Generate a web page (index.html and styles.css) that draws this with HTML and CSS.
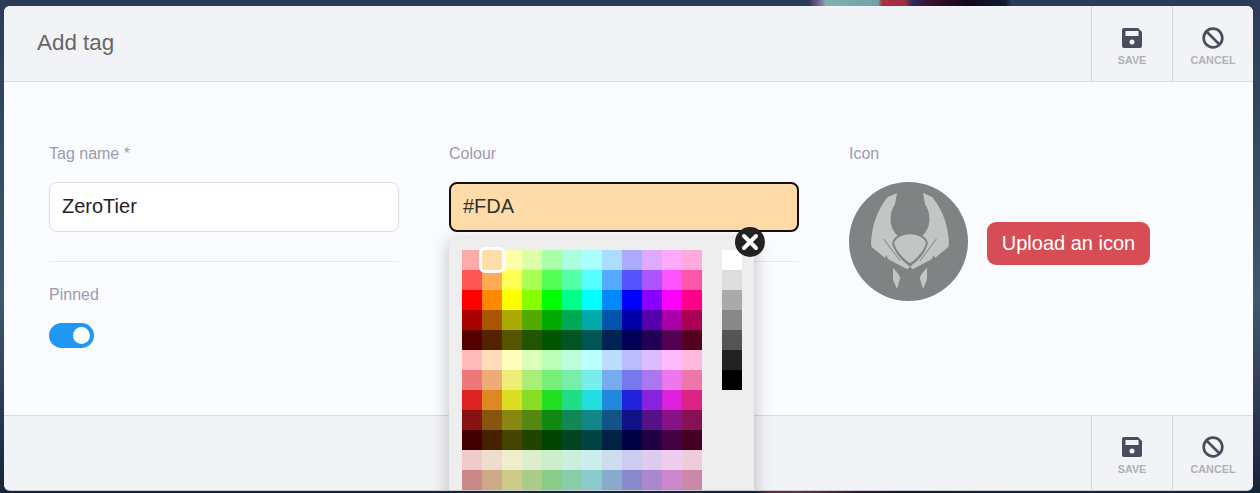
FILE: index.html
```html
<!DOCTYPE html>
<html lang="en">
<head>
    <meta charset="UTF-8">
    <meta name="viewport" content="width=device-width, initial-scale=1.0">
    <title>Add tag</title>
    <link rel="stylesheet" href="styles.css">
</head>
<body>
<div class="modal">
    <div class="bar bar-top">
        <h2 class="title">Add tag</h2>
        <button class="action">
            <svg class="icon" viewBox="0 0 22 22"><path fill-rule="evenodd" d="M4 1h13l4 4v14a2 2 0 0 1-2 2H3a2 2 0 0 1-2-2V3a2 2 0 0 1 2-2zM4.500 4v5h13V4zM11 12.500a2.500 2.500 0 1 0 0 5 2.500 2.500 0 0 0 0-5z"/></svg>
            <span>SAVE</span>
        </button>
        <button class="action">
            <svg class="icon" viewBox="0 0 512 512"><path d="M256 8C119 8 8 119 8 256s111 248 248 248 248-111 248-248S393 8 256 8zm130.100 117.900c65.500 65.500 69.800 166.700 18.300 236.900L149.200 107.600c70.200-51.500 171.400-47.200 236.900 18.300zM125.900 386.100c-65.500-65.500-69.800-166.700-18.300-236.900l255.200 255.200c-70.200 51.500-171.400 47.200-236.900-18.300z"/></svg>
            <span>CANCEL</span>
        </button>
    </div>

    <div class="content">
        <div class="col">
            <label class="label">Tag name *</label>
            <input class="field" type="text" value="ZeroTier">
            <hr class="rule">
            <label class="label">Pinned</label>
            <div class="toggle"><div class="knob"></div></div>
        </div>
        <div class="col">
            <label class="label">Colour</label>
            <input class="field field-colour" type="text" value="#FDA">
            <hr class="rule">
            <div class="picker">
                <div class="close">
                    <svg viewBox="0 0 30 30"><path d="M9 9l12 12M21 9L9 21"/></svg>
                </div>
                <div class="swatches" id="swatches"></div>
                <div class="greys" id="greys"></div>
            </div>
        </div>
        <div class="col">
            <label class="label">Icon</label>
            <div class="icon-row">
                <div class="avatar">
                    <svg viewBox="-18 -9 357 357">
                        <path id="ala" d="M126 24l-6 34c-18 26-20 68 8 94-12 7-17 17-16 26 8 26 28 48 53 67l-8 8-57-30-6-12-4 8-40-33-2-8c2-50 14-96 50-142z"/>
                        <use href="#ala" transform="matrix(-1 0 0 1 330 0)"/>
                        <path d="M165 148c25 0 43 11 48 26-7 26-27 46-48 61-21-15-41-35-48-61 5-15 23-26 48-26z"/>
                        <path id="hoja" d="M114 248l14 16 8 14-10 34-12-28z"/>
                        <use href="#hoja" transform="matrix(-1 0 0 1 330 0)"/>
                        <path class="avatar-line" d="M86 162l50 66M244 162l-50 66"/>
                    </svg>
                </div>
                <button class="upload">Upload an icon</button>
            </div>
        </div>
    </div>

    <div class="bar bar-bottom">
        <div class="spacer"></div>
        <button class="action">
            <svg class="icon" viewBox="0 0 22 22"><path fill-rule="evenodd" d="M4 1h13l4 4v14a2 2 0 0 1-2 2H3a2 2 0 0 1-2-2V3a2 2 0 0 1 2-2zM4.500 4v5h13V4zM11 12.500a2.500 2.500 0 1 0 0 5 2.500 2.500 0 0 0 0-5z"/></svg>
            <span>SAVE</span>
        </button>
        <button class="action">
            <svg class="icon" viewBox="0 0 512 512"><path d="M256 8C119 8 8 119 8 256s111 248 248 248 248-111 248-248S393 8 256 8zm130.100 117.900c65.500 65.500 69.800 166.700 18.300 236.900L149.200 107.600c70.200-51.500 171.400-47.200 236.900 18.300zM125.900 386.100c-65.500-65.500-69.800-166.700-18.300-236.900l255.200 255.200c-70.200 51.500-171.400 47.200-236.900-18.300z"/></svg>
            <span>CANCEL</span>
        </button>
    </div>
</div>

<script>
    const colores = [
        '#faa', '#fda', '#ffa', '#dfa', '#afa', '#afd', '#aff', '#adf', '#aaf', '#daf', '#faf', '#fad',
        '#f55', '#fa5', '#ff5', '#af5', '#5f5', '#5fa', '#5ff', '#5af', '#55f', '#a5f', '#f5f', '#f5a',
        '#f00', '#f80', '#ff0', '#8f0', '#0f0', '#0f8', '#0ff', '#08f', '#00f', '#80f', '#f0f', '#f08',
        '#a00', '#a50', '#aa0', '#5a0', '#0a0', '#0a5', '#0aa', '#05a', '#00a', '#50a', '#a0a', '#a05',
        '#500', '#520', '#550', '#250', '#050', '#052', '#055', '#025', '#005', '#205', '#505', '#502',
        '#fbb', '#fdb', '#ffb', '#dfb', '#bfb', '#bfd', '#bff', '#bdf', '#bbf', '#dbf', '#fbf', '#fbd',
        '#e77', '#ea7', '#ee7', '#ae7', '#7e7', '#7ea', '#7ee', '#7ae', '#77e', '#a7e', '#e7e', '#e7a',
        '#d22', '#d82', '#dd2', '#8d2', '#2d2', '#2d8', '#2dd', '#28d', '#22d', '#82d', '#d2d', '#d28',
        '#811', '#851', '#881', '#581', '#181', '#185', '#188', '#158', '#118', '#518', '#818', '#815',
        '#400', '#420', '#440', '#240', '#040', '#042', '#044', '#024', '#004', '#204', '#404', '#402',
        '#ecc', '#edc', '#eec', '#dec', '#cec', '#ced', '#cee', '#cde', '#cce', '#dce', '#ece', '#ecd',
        '#c88', '#ca8', '#cc8', '#ac8', '#8c8', '#8ca', '#8cc', '#8ac', '#88c', '#a8c', '#c8c', '#c8a'
    ];
    const grises = ['#fff', '#ddd', '#aaa', '#888', '#555', '#222', '#000'];

    function pintar(id, lista, elegido) {
        const caja = document.getElementById(id);
        lista.forEach(function (c) {
            const s = document.createElement('div');
            s.className = c === elegido ? 'swatch picked' : 'swatch';
            s.style.backgroundColor = c;
            caja.appendChild(s);
        });
    }

    pintar('swatches', colores, '#fda');
    pintar('greys', grises);
</script>
</body>
</html>
```

FILE: styles.css
```css
html, body {
    height: 100%;
}
body {
    font-family: "Liberation Sans", Arial, sans-serif;
    margin: 0;
    padding: 6px 7px 3px 4px;
    box-sizing: border-box;
    overflow: hidden;
    background-color: #1f2c42;
    background-image:
        linear-gradient(90deg, transparent 809px, #7c5a8a 818px, #7fb0b0 826px, #6fa4a8 878px, #b03040 882px, #a02c40 905px, #2c2c5c 912px, #3a1030 930px, #10081c 970px, #0c1a30 1005px, transparent 1012px),
        linear-gradient(90deg, transparent 755px, #5a2c40 768px, #6a3040 800px, #2c1c30 860px, #141824 900px, transparent 1000px),
        linear-gradient(180deg, #2c3c58 0, #43566e 300px, #16243a 493px);
    background-size: 100% 6px, 100% 3px, 100% 100%;
    background-position: 0 0, 0 100%, 0 0;
    background-repeat: no-repeat;
}
.modal {
    height: 100%;
    display: flex;
    flex-direction: column;
    background-color: #fafbff;
    border-radius: 6px;
    box-shadow: 0 1px 0 #c9cad0;
    overflow: hidden;
}
.bar {
    height: 75px;
    display: flex;
    flex-shrink: 0;
    background-color: #f2f3f7;
}
.bar-top {
    border-bottom: 1px solid #dcdde2;
}
.bar-bottom {
    height: 74px;
    border-top: 1px solid #dcdde2;
}
.bar-bottom .action {
    padding-top: 20px;
}
.title {
    flex: 1;
    margin: 0;
    padding-left: 33px;
    font-size: 22.400px;
    font-weight: normal;
    line-height: 73px;
    color: #666;
}
.spacer {
    flex: 1;
}
.action {
    width: 81px;
    padding: 21px 0 0;
    box-sizing: border-box;
    border: none;
    border-left: 1px solid #d4d5da;
    background: none;
    display: flex;
    flex-direction: column;
    align-items: center;
    font-family: inherit;
    font-size: 10.800px;
    font-weight: bold;
    line-height: 12px;
    color: #b0b1b6;
}
.action span {
    margin-top: 5px;
}
.icon {
    width: 22px;
    height: 22px;
    fill: #4a4d5e;
}
.content {
    flex: 1;
    display: grid;
    grid-template-columns: 350px 350px 350px;
    column-gap: 50px;
    padding: 62px 0 0 45px;
    min-height: 0;
}
.col {
    position: relative;
}
.label {
    display: block;
    font-size: 16px;
    line-height: 20px;
    color: #9a9cab;
    margin-bottom: 18px;
}
.field {
    display: block;
    width: 100%;
    height: 50px;
    box-sizing: border-box;
    padding: 0 12px 2px;
    border: 1px solid #dcdde3;
    border-radius: 8px;
    background-color: #fff;
    font-family: inherit;
    font-size: 20px;
    color: #222;
}
.field-colour {
    border: 2px solid #111;
    background-color: #fedba8;
    color: #333;
}
.rule {
    margin: 29px 0 23px;
    border: none;
    border-top: 1px solid #e8e9ec;
}
.toggle {
    width: 45px;
    height: 25px;
    padding: 4px 4px 4px 24px;
    box-sizing: border-box;
    border-radius: 13px;
    background-color: #2196f3;
}
.knob {
    width: 17px;
    height: 17px;
    border-radius: 50%;
    background-color: #fff;
}
.picker {
    position: absolute;
    left: 0;
    top: 94px;
    width: 305px;
    height: 270px;
    padding: 12px 12px 12px 13px;
    box-sizing: border-box;
    display: flex;
    gap: 20px;
    align-items: flex-start;
    background-color: #eee;
    box-shadow: 0 4px 16px rgba(0, 0, 0, 0.25);
}
.swatches {
    width: 240px;
    display: flex;
    flex-wrap: wrap;
}
.greys {
    width: 20px;
}
.swatch {
    width: 20px;
    height: 20px;
}
.picked {
    position: relative;
    z-index: 1;
    margin: -3px;
    border: 3px solid #fff;
    border-radius: 6px;
}
.close {
    position: absolute;
    right: -11px;
    top: -11px;
    z-index: 2;
    width: 30px;
    height: 30px;
    border-radius: 50%;
    background-color: #222;
}
.close svg {
    display: block;
    fill: none;
    stroke: #fff;
    stroke-width: 4;
    stroke-linecap: round;
}
.icon-row {
    display: flex;
    align-items: center;
    gap: 19px;
}
.avatar {
    width: 119px;
    height: 119px;
    border-radius: 50%;
    background-color: #7f8383;
    overflow: hidden;
}
.avatar svg {
    display: block;
    fill: #c2c5c3;
}
.avatar-line {
    fill: none;
    stroke: #7f8383;
    stroke-width: 3;
}
.upload {
    margin-top: 4px;
    width: 163px;
    height: 43px;
    padding: 0;
    border: none;
    border-radius: 9px;
    background-color: #d64d56;
    color: #fff;
    font-family: inherit;
    font-size: 20px;
}
```
